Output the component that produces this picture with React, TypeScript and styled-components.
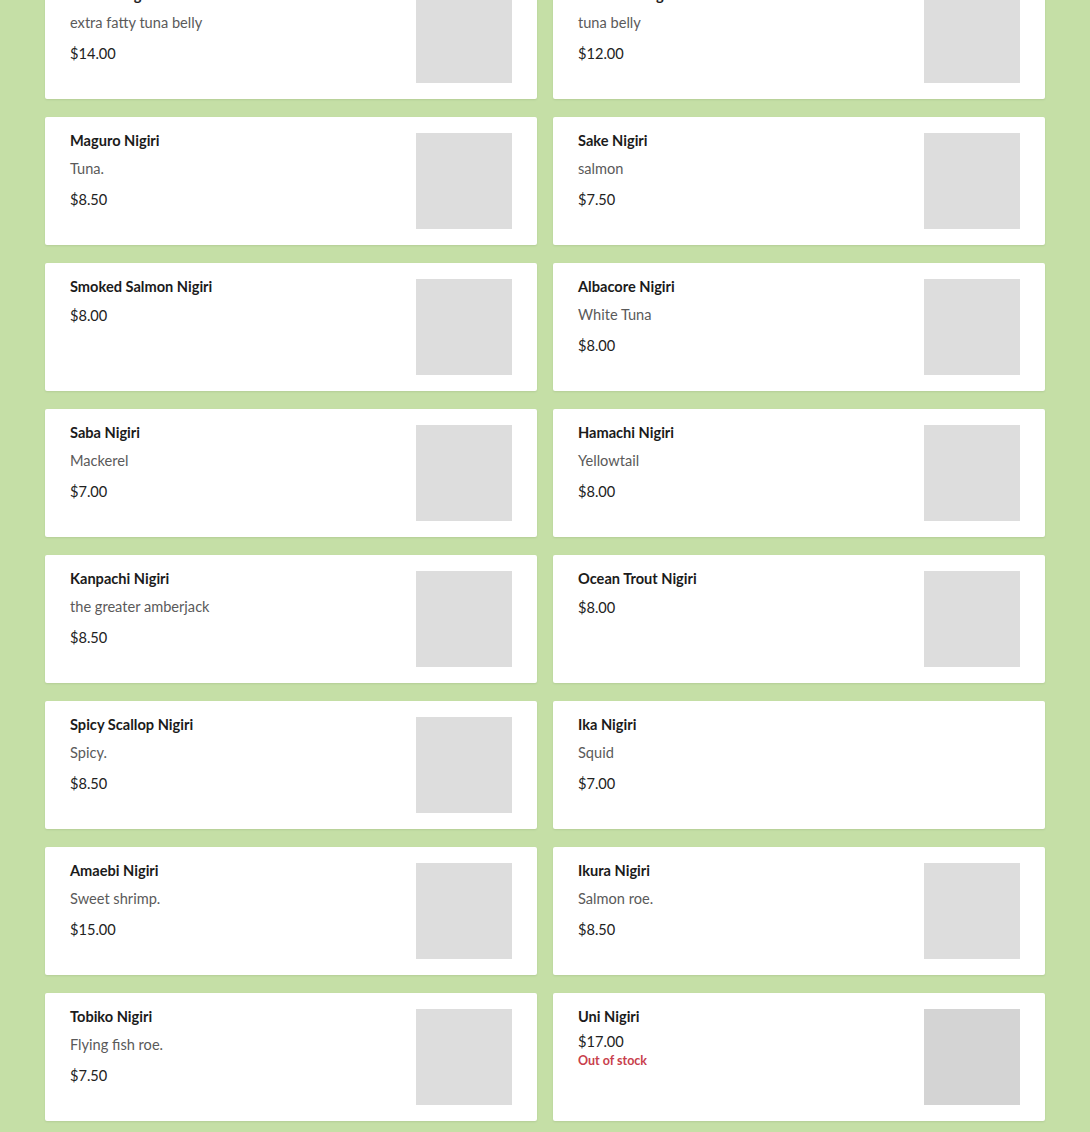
import React from "react";
import styled, { createGlobalStyle } from "styled-components";

const GlobalStyle = createGlobalStyle`
  html, body {
    margin: 0;
    padding: 0;
    background: #c5dfa6;
    font-family: Lato, "Noto Sans", sans-serif;
    -webkit-font-smoothing: antialiased;
  }
`;

type Item = {
  name: string;
  description?: string;
  price: string;
  image?: boolean;
  outOfStock?: boolean;
};

const items: Item[] = [
  { name: "O-Toro Nigiri", description: "extra fatty tuna belly", price: "$14.00", image: true },
  { name: "Chu-Toro Nigiri", description: "tuna belly", price: "$12.00", image: true },
  { name: "Maguro Nigiri", description: "Tuna.", price: "$8.50", image: true },
  { name: "Sake Nigiri", description: "salmon", price: "$7.50", image: true },
  { name: "Smoked Salmon Nigiri", price: "$8.00", image: true },
  { name: "Albacore Nigiri", description: "White Tuna", price: "$8.00", image: true },
  { name: "Saba Nigiri", description: "Mackerel", price: "$7.00", image: true },
  { name: "Hamachi Nigiri", description: "Yellowtail", price: "$8.00", image: true },
  { name: "Kanpachi Nigiri", description: "the greater amberjack", price: "$8.50", image: true },
  { name: "Ocean Trout Nigiri", price: "$8.00", image: true },
  { name: "Spicy Scallop Nigiri", description: "Spicy.", price: "$8.50", image: true },
  { name: "Ika Nigiri", description: "Squid", price: "$7.00" },
  { name: "Amaebi Nigiri", description: "Sweet shrimp.", price: "$15.00", image: true },
  { name: "Ikura Nigiri", description: "Salmon roe.", price: "$8.50", image: true },
  { name: "Tobiko Nigiri", description: "Flying fish roe.", price: "$7.50", image: true },
  { name: "Uni Nigiri", price: "$17.00", image: true, outOfStock: true },
];

const Page = styled.main`
  width: 1000px;
  margin: -29px auto 0;
  padding-bottom: 11px;
`;

const Grid = styled.ul`
  list-style: none;
  margin: 0;
  padding: 0;
  display: grid;
  grid-template-columns: 1fr 1fr;
  column-gap: 16px;
  row-gap: 18px;
`;

const Card = styled.li`
  display: flex;
  justify-content: space-between;
  align-items: flex-start;
  height: 128px;
  box-sizing: border-box;
  padding: 16px 25px 16px 25px;
  background: #ffffff;
  border-radius: 2px;
  box-shadow: 0 1px 2px rgba(60, 80, 40, 0.12);
`;

const Info = styled.div`
  display: flex;
  flex-direction: column;
  min-width: 0;
`;

const Name = styled.h3`
  margin: 0;
  font-size: 14.6px;
  line-height: 16px;
  font-weight: 700;
  color: #1b1b1b;
`;

const Description = styled.p`
  margin: 10px 0 0;
  font-size: 14.6px;
  line-height: 20px;
  font-weight: 400;
  color: #5a5a5a;
`;

const Price = styled.p<{ $gap: number }>`
  margin: ${(p) => p.$gap}px 0 0;
  font-size: 14.6px;
  line-height: 20px;
  font-weight: 400;
  color: #222222;
`;

const Stock = styled.span`
  margin-top: 1px;
  font-size: 12.5px;
  line-height: 16px;
  font-weight: 700;
  color: #c8404c;
`;

const Thumb = styled.div<{ $dim?: boolean }>`
  width: 96px;
  height: 96px;
  flex: none;
  background: ${(p) => (p.$dim ? "#d4d4d4" : "#dddddd")};
`;

export default function App() {
  return (
    <>
      <GlobalStyle />
      <Page>
        <Grid>
          {items.map((item) => (
            <Card key={item.name}>
              <Info>
                <Name>{item.name}</Name>
                {item.description && <Description>{item.description}</Description>}
                <Price $gap={item.outOfStock ? 7 : 11}>{item.price}</Price>
                {item.outOfStock && <Stock>Out of stock</Stock>}
              </Info>
              {item.image && <Thumb $dim={item.outOfStock} />}
            </Card>
          ))}
        </Grid>
      </Page>
    </>
  );
}
